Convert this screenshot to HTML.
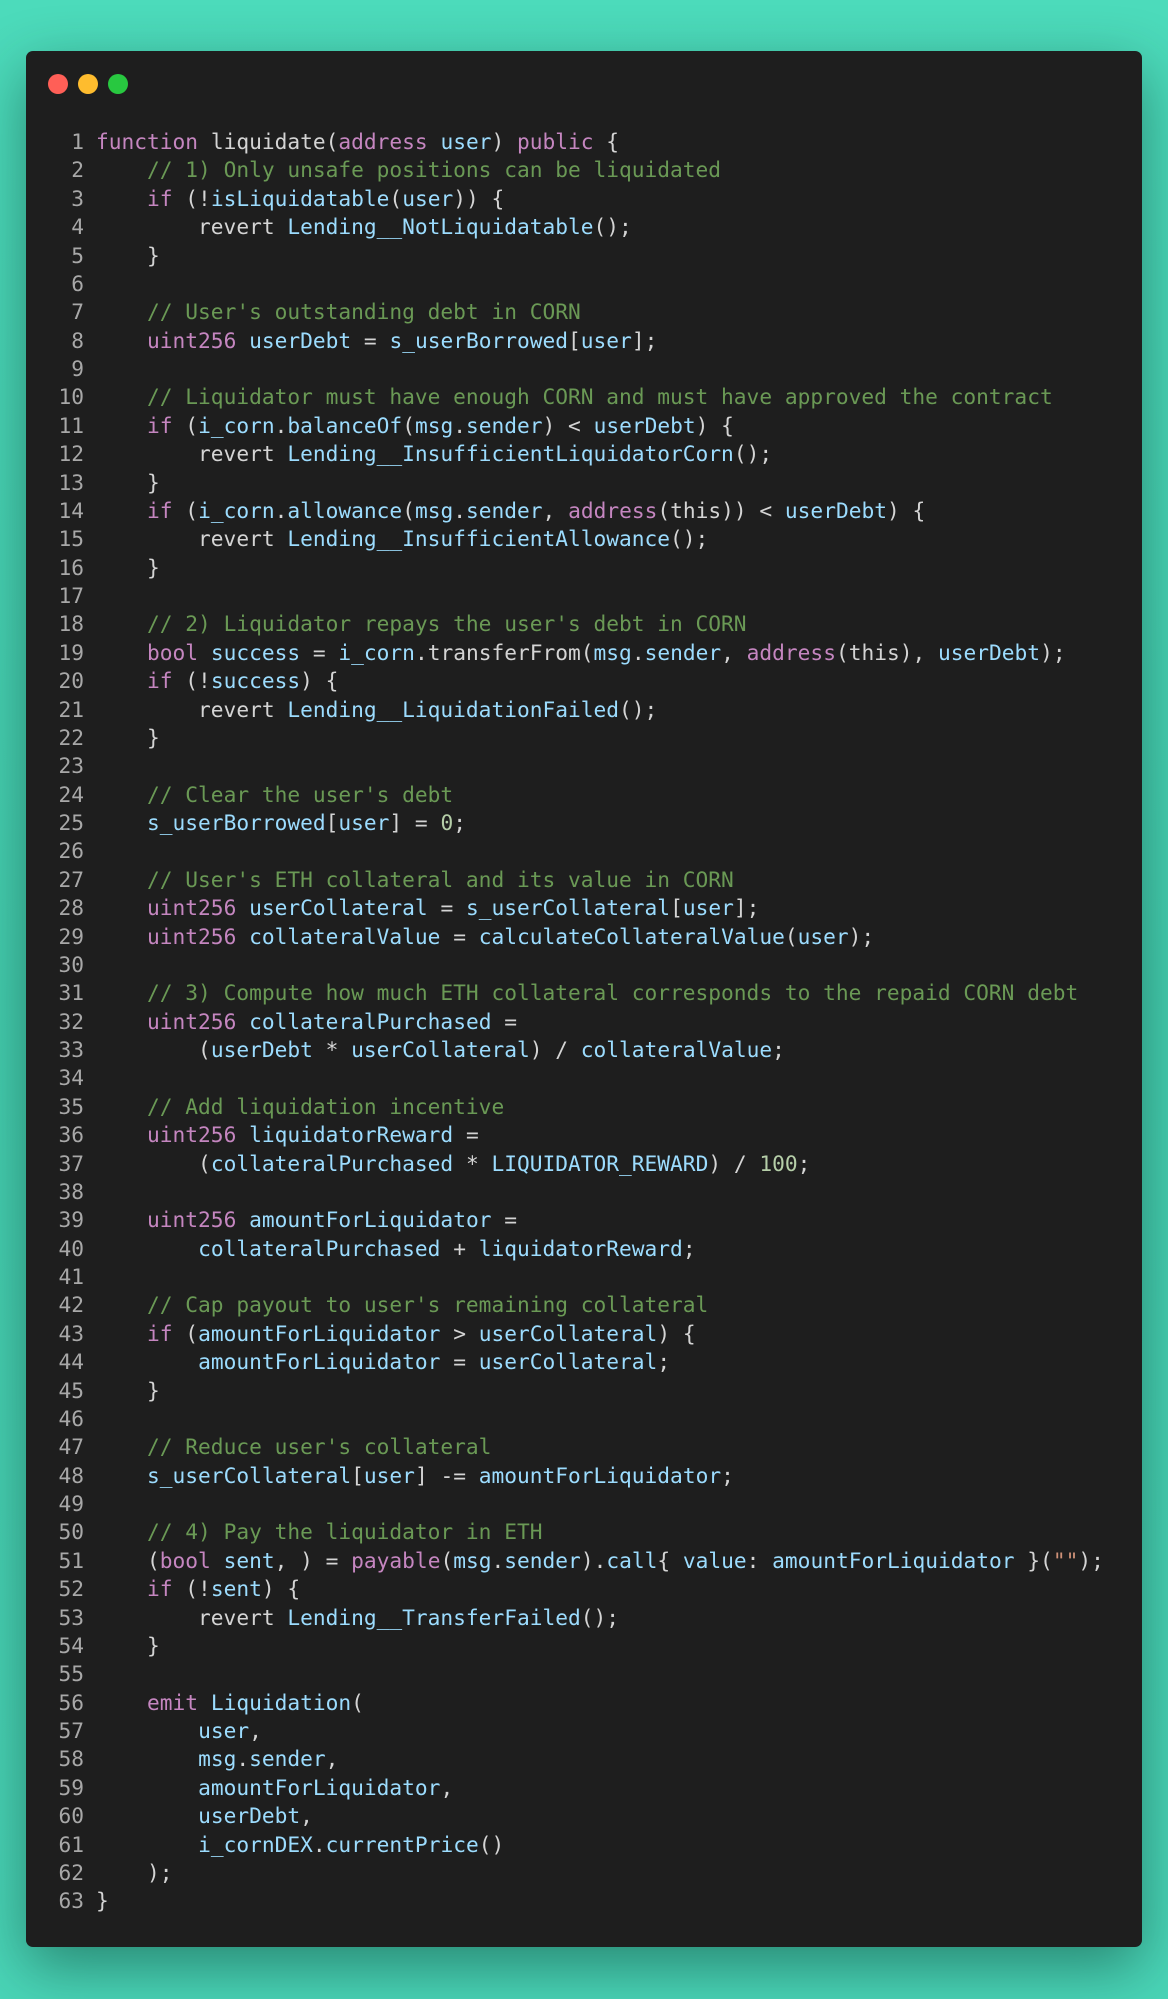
<!DOCTYPE html>
<html><head><meta charset="utf-8"><style>
html,body{margin:0;padding:0}
body{width:1168px;height:1999px;background:linear-gradient(180deg,#4cdbbb 0%,#45cfb0 50%,#4ad6b8 100%);position:relative;overflow:hidden}
.win{position:absolute;left:26px;top:51px;width:1116px;height:1896px;background:#1e1e1e;border-radius:7px;box-shadow:0 20px 60px rgba(0,40,30,.45)}
.dot{position:absolute;top:74px;width:20px;height:20px;border-radius:50%}
pre{position:absolute;left:0;top:128px;margin:0;font-family:"DejaVu Sans Mono","Liberation Mono",monospace;font-size:21.2px;line-height:28.38px;color:#d4d4d4;white-space:pre}
.ln{color:#a8a8a8;display:inline-block;width:84px;text-align:right;padding-right:12px}
.k{color:#c586c0}.v{color:#9cdcfe}.c{color:#6a9955}.n{color:#b5cea8}.s{color:#ce9178}
</style></head><body>
<div class="win"></div>
<div class="dot" style="left:48px;background:#ff5f57"></div>
<div class="dot" style="left:78px;background:#febc2e"></div>
<div class="dot" style="left:108px;background:#28c840"></div>
<pre><span class="ln">1</span><span class="k">function</span> liquidate(<span class="k">address</span> <span class="v">user</span>) <span class="k">public</span> {
<span class="ln">2</span>    <span class="c">// 1) Only unsafe positions can be liquidated</span>
<span class="ln">3</span>    <span class="k">if</span> (!<span class="v">isLiquidatable</span>(<span class="v">user</span>)) {
<span class="ln">4</span>        revert <span class="v">Lending__NotLiquidatable</span>();
<span class="ln">5</span>    }
<span class="ln">6</span>
<span class="ln">7</span>    <span class="c">// User's outstanding debt in CORN</span>
<span class="ln">8</span>    <span class="k">uint256</span> <span class="v">userDebt</span> = <span class="v">s_userBorrowed</span>[<span class="v">user</span>];
<span class="ln">9</span>
<span class="ln">10</span>    <span class="c">// Liquidator must have enough CORN and must have approved the contract</span>
<span class="ln">11</span>    <span class="k">if</span> (<span class="v">i_corn</span>.<span class="v">balanceOf</span>(<span class="v">msg</span>.<span class="v">sender</span>) &lt; <span class="v">userDebt</span>) {
<span class="ln">12</span>        revert <span class="v">Lending__InsufficientLiquidatorCorn</span>();
<span class="ln">13</span>    }
<span class="ln">14</span>    <span class="k">if</span> (<span class="v">i_corn</span>.<span class="v">allowance</span>(<span class="v">msg</span>.<span class="v">sender</span>, <span class="k">address</span>(this)) &lt; <span class="v">userDebt</span>) {
<span class="ln">15</span>        revert <span class="v">Lending__InsufficientAllowance</span>();
<span class="ln">16</span>    }
<span class="ln">17</span>
<span class="ln">18</span>    <span class="c">// 2) Liquidator repays the user's debt in CORN</span>
<span class="ln">19</span>    <span class="k">bool</span> <span class="v">success</span> = <span class="v">i_corn</span>.transferFrom(<span class="v">msg</span>.<span class="v">sender</span>, <span class="k">address</span>(this), <span class="v">userDebt</span>);
<span class="ln">20</span>    <span class="k">if</span> (!<span class="v">success</span>) {
<span class="ln">21</span>        revert <span class="v">Lending__LiquidationFailed</span>();
<span class="ln">22</span>    }
<span class="ln">23</span>
<span class="ln">24</span>    <span class="c">// Clear the user's debt</span>
<span class="ln">25</span>    <span class="v">s_userBorrowed</span>[<span class="v">user</span>] = <span class="n">0</span>;
<span class="ln">26</span>
<span class="ln">27</span>    <span class="c">// User's ETH collateral and its value in CORN</span>
<span class="ln">28</span>    <span class="k">uint256</span> <span class="v">userCollateral</span> = <span class="v">s_userCollateral</span>[<span class="v">user</span>];
<span class="ln">29</span>    <span class="k">uint256</span> <span class="v">collateralValue</span> = <span class="v">calculateCollateralValue</span>(<span class="v">user</span>);
<span class="ln">30</span>
<span class="ln">31</span>    <span class="c">// 3) Compute how much ETH collateral corresponds to the repaid CORN debt</span>
<span class="ln">32</span>    <span class="k">uint256</span> <span class="v">collateralPurchased</span> =
<span class="ln">33</span>        (<span class="v">userDebt</span> * <span class="v">userCollateral</span>) / <span class="v">collateralValue</span>;
<span class="ln">34</span>
<span class="ln">35</span>    <span class="c">// Add liquidation incentive</span>
<span class="ln">36</span>    <span class="k">uint256</span> <span class="v">liquidatorReward</span> =
<span class="ln">37</span>        (<span class="v">collateralPurchased</span> * <span class="v">LIQUIDATOR_REWARD</span>) / <span class="n">100</span>;
<span class="ln">38</span>
<span class="ln">39</span>    <span class="k">uint256</span> <span class="v">amountForLiquidator</span> =
<span class="ln">40</span>        <span class="v">collateralPurchased</span> + <span class="v">liquidatorReward</span>;
<span class="ln">41</span>
<span class="ln">42</span>    <span class="c">// Cap payout to user's remaining collateral</span>
<span class="ln">43</span>    <span class="k">if</span> (<span class="v">amountForLiquidator</span> &gt; <span class="v">userCollateral</span>) {
<span class="ln">44</span>        <span class="v">amountForLiquidator</span> = <span class="v">userCollateral</span>;
<span class="ln">45</span>    }
<span class="ln">46</span>
<span class="ln">47</span>    <span class="c">// Reduce user's collateral</span>
<span class="ln">48</span>    <span class="v">s_userCollateral</span>[<span class="v">user</span>] -= <span class="v">amountForLiquidator</span>;
<span class="ln">49</span>
<span class="ln">50</span>    <span class="c">// 4) Pay the liquidator in ETH</span>
<span class="ln">51</span>    (<span class="k">bool</span> <span class="v">sent</span>, ) = <span class="k">payable</span>(<span class="v">msg</span>.<span class="v">sender</span>).<span class="v">call</span>{ <span class="v">value</span>: <span class="v">amountForLiquidator</span> }(<span class="s">""</span>);
<span class="ln">52</span>    <span class="k">if</span> (!<span class="v">sent</span>) {
<span class="ln">53</span>        revert <span class="v">Lending__TransferFailed</span>();
<span class="ln">54</span>    }
<span class="ln">55</span>
<span class="ln">56</span>    <span class="k">emit</span> <span class="v">Liquidation</span>(
<span class="ln">57</span>        <span class="v">user</span>,
<span class="ln">58</span>        <span class="v">msg</span>.<span class="v">sender</span>,
<span class="ln">59</span>        <span class="v">amountForLiquidator</span>,
<span class="ln">60</span>        <span class="v">userDebt</span>,
<span class="ln">61</span>        <span class="v">i_cornDEX</span>.<span class="v">currentPrice</span>()
<span class="ln">62</span>    );
<span class="ln">63</span>}</pre>
</body></html>
